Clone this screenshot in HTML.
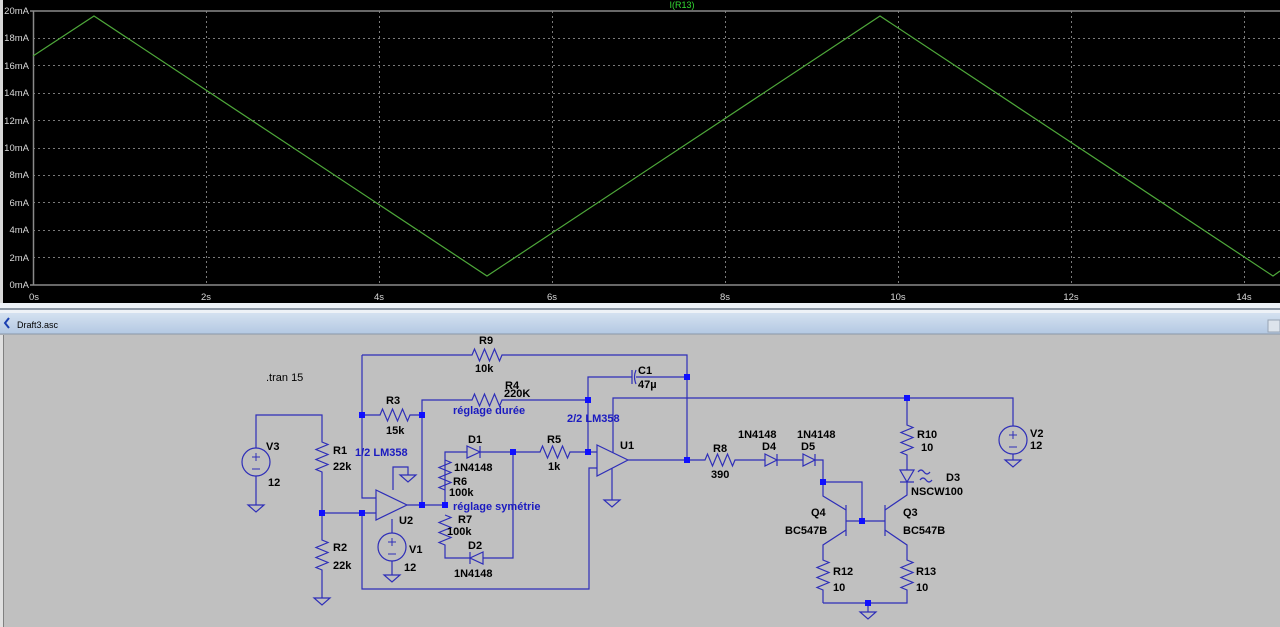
<!DOCTYPE html>
<html><head><meta charset="utf-8"><style>
html,body{margin:0;padding:0;width:1280px;height:627px;overflow:hidden;background:#c0c0c0;font-family:"Liberation Sans",sans-serif}
svg{position:absolute;left:0;top:0}
</style></head><body>
<svg width="1280" height="627" xmlns="http://www.w3.org/2000/svg">
<rect x="0" y="0" width="1280" height="303" fill="#000"/>
<rect x="0" y="0" width="3" height="303" fill="#d8d8d8"/>
<g stroke="#7a7a7a" stroke-width="1" stroke-dasharray="2,3">
<line x1="206.5" y1="11" x2="206.5" y2="285"/><line x1="379.5" y1="11" x2="379.5" y2="285"/><line x1="552.5" y1="11" x2="552.5" y2="285"/><line x1="725.5" y1="11" x2="725.5" y2="285"/><line x1="898.5" y1="11" x2="898.5" y2="285"/><line x1="1071.5" y1="11" x2="1071.5" y2="285"/><line x1="1244.5" y1="11" x2="1244.5" y2="285"/>
<line x1="33" y1="38.5" x2="1280" y2="38.5"/><line x1="33" y1="65.5" x2="1280" y2="65.5"/><line x1="33" y1="93.5" x2="1280" y2="93.5"/><line x1="33" y1="120.5" x2="1280" y2="120.5"/><line x1="33" y1="148.5" x2="1280" y2="148.5"/><line x1="33" y1="175.5" x2="1280" y2="175.5"/><line x1="33" y1="202.5" x2="1280" y2="202.5"/><line x1="33" y1="230.5" x2="1280" y2="230.5"/><line x1="33" y1="257.5" x2="1280" y2="257.5"/>
</g>
<g stroke="#8a8a8a" stroke-width="1.5"><line x1="30" y1="11" x2="1280" y2="11"/><line x1="30" y1="285" x2="1280" y2="285"/><line x1="33.5" y1="11" x2="33.5" y2="285"/></g>
<g fill="#d8d8d8" font-size="9.5" text-anchor="end">
<text x="29" y="14">20mA</text><text x="29" y="41">18mA</text><text x="29" y="69">16mA</text><text x="29" y="96">14mA</text><text x="29" y="124">12mA</text><text x="29" y="151">10mA</text><text x="29" y="178">8mA</text><text x="29" y="206">6mA</text><text x="29" y="233">4mA</text><text x="29" y="261">2mA</text><text x="29" y="288">0mA</text>
</g>
<g fill="#d8d8d8" font-size="9.5" text-anchor="middle">
<text x="34" y="300">0s</text><text x="206" y="300">2s</text><text x="379" y="300">4s</text><text x="552" y="300">6s</text><text x="725" y="300">8s</text><text x="898" y="300">10s</text><text x="1071" y="300">12s</text><text x="1244" y="300">14s</text>
</g>
<text x="682" y="8" fill="#33dd33" font-size="9" text-anchor="middle">I(R13)</text>
<polyline points="33,56 94,16 487,276 880,16 1273,276 1280,271" fill="none" stroke="#4ea83a" stroke-width="1.2"/>
<rect x="0" y="303" width="1280" height="10" fill="#eef2f7"/>
<rect x="0" y="308" width="1280" height="2" fill="#8f9aa8"/>
<defs><linearGradient id="tb" x1="0" y1="0" x2="0" y2="1"><stop offset="0" stop-color="#d4e1f0"/><stop offset="1" stop-color="#b3c8e2"/></linearGradient></defs>
<rect x="0" y="313" width="1280" height="21" fill="url(#tb)"/>
<line x1="0" y1="334" x2="1280" y2="334" stroke="#8a97a8"/>
<rect x="1268" y="320" width="12" height="12" fill="#dde4ec" stroke="#98a4b4"/>
<path d="M9 318 L5 323 L9 328" fill="none" stroke="#1a3fb0" stroke-width="2"/>
<text x="17" y="328" font-size="9" fill="#000">Draft3.asc</text>
<rect x="0" y="335" width="3" height="292" fill="#e0e0e0"/>
<line x1="3.5" y1="335" x2="3.5" y2="627" stroke="#808080"/>

<g stroke="#2e2eb8" stroke-width="1.2" fill="none">
<path d="M362 355 H472 l2.5 -6 l5 12 l5 -12 l5 12 l5 -12 l5 12 l2.5 -6 H687 V460"/>
<path d="M362 355 V498 H376"/>
<path d="M362 415 H380 l2.5 -6 l5 12 l5 -12 l5 12 l5 -12 l5 12 l2.5 -6 H422"/>
<path d="M422 505 V400 H472 l2.5 -6 l5 12 l5 -12 l5 12 l5 -12 l5 12 l2.5 -6 H588"/>
<path d="M588 452 V377 H632 M636 377 H687"/>
<path d="M632 370 V384 M636 370 Q633 377 636 384"/>
<circle cx="256" cy="462" r="14"/>
<path d="M256 448 V415 H322 V442 l6 2.5 l-12 5 l12 5 l-12 5 l12 5 l-12 5 l6 2.5 V540 l6 2.5 l-12 5 l12 5 l-12 5 l12 5 l-12 5 l6 2.5 V598"/>
<path d="M256 476 V505"/>
<path d="M322 513 H376"/>
<path d="M362 513 V589 H589 V468 H597"/>
<path d="M376 490 L407 505 L376 520 Z"/>
<path d="M407 505 H445"/>
<path d="M393 490 V467 H408 V475"/>
<path d="M392 519 V533"/>
<circle cx="392" cy="547" r="14"/>
<path d="M392 561 V575"/>
<path d="M445 505 V452 H467 M480 452 H540 l2.5 -6 l5 12 l5 -12 l5 12 l5 -12 l5 12 l2.5 -6 H597"/>
<path d="M467 446 L480 452 L467 458 Z M480 446 V458"/>
<path d="M445 460 l6 2.5 l-12 5 l12 5 l-12 5 l12 5 l-12 5 l6 2.5 M445 515 l6 2.5 l-12 5 l12 5 l-12 5 l12 5 l-12 5 l6 2.5 V558 H470 M483 558 H513 V452"/>
<path d="M483 552 L470 558 L483 564 Z M470 552 V564"/>
<path d="M597 445 L628 460 L597 476 Z"/>
<path d="M613 453 V398 H1013 V426"/>
<path d="M612 468 V500"/>
<path d="M628 460 H705 l2.5 -6 l5 12 l5 -12 l5 12 l5 -12 l5 12 l2.5 -6 H765 M777 460 H803 M815 460 H823 V482 H862 V521 H885"/>
<path d="M765 454 L777 460 L765 466 Z M777 454 V466 M803 454 L815 460 L803 466 Z M815 454 V466"/>
<circle cx="1013" cy="440" r="14"/>
<path d="M1013 454 V460"/>
<path d="M907 398 V425 l6 2.5 l-12 5 l12 5 l-12 5 l12 5 l-12 5 l6 2.5 V470 M907 482 V495 L885 510"/>
<path d="M900 470 H914 L907 482 Z M900 482 H914"/>
<path d="M918 472 q3 -4 6 0 q3 4 6 0 M920 480 q3 -4 6 0 q3 4 6 0"/>
<path d="M885 505 V536 M885 530 L907 545 V560 l6 2.5 l-12 5 l12 5 l-12 5 l12 5 l-12 5 l6 2.5 V603 H823"/>
<path d="M846 505 V536 M846 521 H862 M846 510 L823 496 V482 M846 530 L823 545 V560 l6 2.5 l-12 5 l12 5 l-12 5 l12 5 l-12 5 l6 2.5 V603"/>
<path d="M868 603 V612"/>
</g>
<g stroke="#2e2eb8" stroke-width="1.2" fill="none">
<path d="M248 505 H264 L256 512 Z"/><path d="M314 598 H330 L322 605 Z"/><path d="M400 475 H416 L408 482 Z"/><path d="M384 575 H400 L392 582 Z"/><path d="M604 500 H620 L612 507 Z"/><path d="M1005 460 H1021 L1013 467 Z"/><path d="M860 612 H876 L868 619 Z"/>
</g>
<g fill="#2e2eb8" stroke="#2e2eb8" stroke-width="1">
<path d="M252 457 H260 M256 453 V461 M252 469 H260"/>
<path d="M388 542 H396 M392 538 V546 M388 554 H396"/>
<path d="M1009 435 H1017 M1013 431 V439 M1009 447 H1017"/>
</g>
<g fill="#1010ff">
<rect x="359" y="412" width="6" height="6"/><rect x="419" y="412" width="6" height="6"/><rect x="585" y="397" width="6" height="6"/><rect x="684" y="374" width="6" height="6"/><rect x="585" y="449" width="6" height="6"/><rect x="319" y="510" width="6" height="6"/><rect x="359" y="510" width="6" height="6"/><rect x="419" y="502" width="6" height="6"/><rect x="442" y="502" width="6" height="6"/><rect x="510" y="449" width="6" height="6"/><rect x="684" y="457" width="6" height="6"/><rect x="904" y="395" width="6" height="6"/><rect x="820" y="479" width="6" height="6"/><rect x="859" y="518" width="6" height="6"/><rect x="865" y="600" width="6" height="6"/>
</g>
<g font-size="11" font-weight="bold" fill="#000">
<text x="266" y="381" font-weight="normal">.tran 15</text>
<text x="479" y="344">R9</text><text x="475" y="372">10k</text>
<text x="505" y="389">R4</text><text x="504" y="397">220K</text>
<text x="386" y="404">R3</text><text x="386" y="434">15k</text>
<text x="266" y="450">V3</text><text x="268" y="486">12</text>
<text x="333" y="454">R1</text><text x="333" y="470">22k</text>
<text x="333" y="551">R2</text><text x="333" y="569">22k</text>
<text x="468" y="443">D1</text><text x="454" y="471">1N4148</text>
<text x="453" y="485">R6</text><text x="449" y="496">100k</text>
<text x="458" y="523">R7</text><text x="447" y="535">100k</text>
<text x="468" y="549">D2</text><text x="454" y="577">1N4148</text>
<text x="399" y="524">U2</text><text x="409" y="553">V1</text><text x="404" y="571">12</text>
<text x="547" y="443">R5</text><text x="548" y="470">1k</text>
<text x="620" y="449">U1</text>
<text x="638" y="374">C1</text><text x="638" y="388">47µ</text>
<text x="713" y="452">R8</text><text x="711" y="478">390</text>
<text x="738" y="438">1N4148</text><text x="762" y="450">D4</text>
<text x="797" y="438">1N4148</text><text x="801" y="450">D5</text>
<text x="917" y="438">R10</text><text x="921" y="451">10</text>
<text x="946" y="481">D3</text><text x="911" y="495">NSCW100</text>
<text x="811" y="516">Q4</text><text x="785" y="534">BC547B</text>
<text x="903" y="516">Q3</text><text x="903" y="534">BC547B</text>
<text x="833" y="575">R12</text><text x="833" y="591">10</text>
<text x="916" y="575">R13</text><text x="916" y="591">10</text>
<text x="1030" y="437">V2</text><text x="1030" y="449">12</text>
</g>
<g font-size="11" font-weight="bold" fill="#1a1ac0">
<text x="355" y="456">1/2 LM358</text>
<text x="453" y="414">réglage durée</text>
<text x="453" y="510">réglage symétrie</text>
<text x="567" y="422">2/2 LM358</text>
</g>
</svg>
</body></html>
